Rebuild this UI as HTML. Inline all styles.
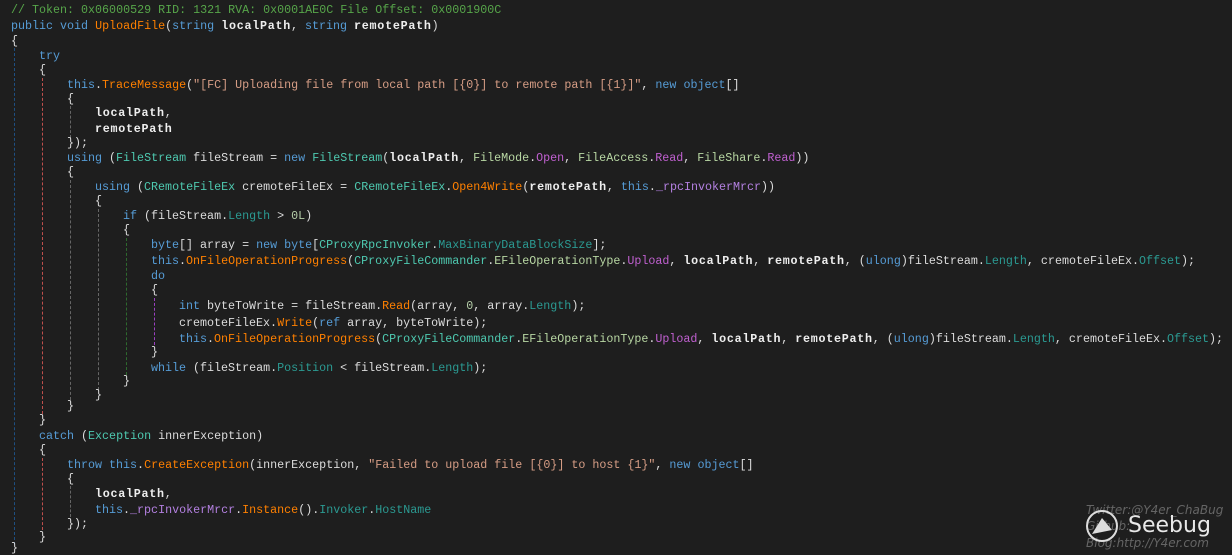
<!DOCTYPE html>
<html><head><meta charset="utf-8"><style>
html,body{margin:0;padding:0;background:#1e1e1e;width:1232px;height:555px;overflow:hidden}
body{position:relative;font-family:"Liberation Mono",monospace;font-size:11.68px;color:#dcdcdc}
.l{position:absolute;white-space:pre;height:15px;line-height:15px}
.k{color:#569cd6}.m{color:#ff8000}.s{color:#d69d85}.t{color:#4ec9b0}.p{color:#2b9a92}
.n{color:#b5cea8}.b{font-weight:bold;color:#eeeeee;letter-spacing:0.75px}.f{color:#b380e0}.c{color:#57a64a}
.e{color:#b8d7a3}.u{color:#c060d0}
.g{position:absolute;width:0;border-left:1px dashed}
.wm{position:absolute;color:#777;font-family:"DejaVu Sans",sans-serif;font-style:italic;font-size:12px;opacity:.8}
</style></head><body>
<div class="g" style="left:14px;top:48px;height:497px;border-color:#1f4f80"></div>
<div class="g" style="left:42px;top:78px;height:336px;border-color:#c0504d"></div>
<div class="g" style="left:42px;top:458px;height:72px;border-color:#c0504d"></div>
<div class="g" style="left:70px;top:106px;height:32px;border-color:#666"></div>
<div class="g" style="left:70px;top:180px;height:225px;border-color:#666"></div>
<div class="g" style="left:70px;top:486px;height:31px;border-color:#666"></div>
<div class="g" style="left:98px;top:209px;height:181px;border-color:#666"></div>
<div class="g" style="left:126px;top:238px;height:137px;border-color:#2e6a2e"></div>
<div class="g" style="left:154px;top:298px;height:47px;border-color:#9a40c0"></div>

<div class="l" style="top:3px;left:11px"><span class="c">// Token: 0x06000529 RID: 1321 RVA: 0x0001AE0C File Offset: 0x0001900C</span></div>
<div class="l" style="top:19px;left:11px"><span class="k">public void</span> <span class="m">UploadFile</span>(<span class="k">string</span> <span class="b">localPath</span>, <span class="k">string</span> <span class="b">remotePath</span>)</div>
<div class="l" style="top:34px;left:11px">{</div>
<div class="l" style="top:49px;left:39px"><span class="k">try</span></div>
<div class="l" style="top:63px;left:39px">{</div>
<div class="l" style="top:78px;left:67px"><span class="k">this</span>.<span class="m">TraceMessage</span>(<span class="s">"[FC] Uploading file from local path [{0}] to remote path [{1}]"</span>, <span class="k">new object</span>[]</div>
<div class="l" style="top:92px;left:67px">{</div>
<div class="l" style="top:106px;left:95px"><span class="b">localPath</span>,</div>
<div class="l" style="top:122px;left:95px"><span class="b">remotePath</span></div>
<div class="l" style="top:136px;left:67px">});</div>
<div class="l" style="top:151px;left:67px"><span class="k">using</span> (<span class="t">FileStream</span> fileStream = <span class="k">new</span> <span class="t">FileStream</span>(<span class="b">localPath</span>, <span class="e">FileMode</span>.<span class="u">Open</span>, <span class="e">FileAccess</span>.<span class="u">Read</span>, <span class="e">FileShare</span>.<span class="u">Read</span>))</div>
<div class="l" style="top:165px;left:67px">{</div>
<div class="l" style="top:180px;left:95px"><span class="k">using</span> (<span class="t">CRemoteFileEx</span> cremoteFileEx = <span class="t">CRemoteFileEx</span>.<span class="m">Open4Write</span>(<span class="b">remotePath</span>, <span class="k">this</span>.<span class="f">_rpcInvokerMrcr</span>))</div>
<div class="l" style="top:194px;left:95px">{</div>
<div class="l" style="top:209px;left:123px"><span class="k">if</span> (fileStream.<span class="p">Length</span> &gt; <span class="n">0L</span>)</div>
<div class="l" style="top:223px;left:123px">{</div>
<div class="l" style="top:238px;left:151px"><span class="k">byte</span>[] array = <span class="k">new byte</span>[<span class="t">CProxyRpcInvoker</span>.<span class="p">MaxBinaryDataBlockSize</span>];</div>
<div class="l" style="top:254px;left:151px"><span class="k">this</span>.<span class="m">OnFileOperationProgress</span>(<span class="t">CProxyFileCommander</span>.<span class="e">EFileOperationType</span>.<span class="u">Upload</span>, <span class="b">localPath</span>, <span class="b">remotePath</span>, (<span class="k">ulong</span>)fileStream.<span class="p">Length</span>, cremoteFileEx.<span class="p">Offset</span>);</div>
<div class="l" style="top:269px;left:151px"><span class="k">do</span></div>
<div class="l" style="top:283px;left:151px">{</div>
<div class="l" style="top:299px;left:179px"><span class="k">int</span> byteToWrite = fileStream.<span class="m">Read</span>(array, <span class="n">0</span>, array.<span class="p">Length</span>);</div>
<div class="l" style="top:316px;left:179px">cremoteFileEx.<span class="m">Write</span>(<span class="k">ref</span> array, byteToWrite);</div>
<div class="l" style="top:332px;left:179px"><span class="k">this</span>.<span class="m">OnFileOperationProgress</span>(<span class="t">CProxyFileCommander</span>.<span class="e">EFileOperationType</span>.<span class="u">Upload</span>, <span class="b">localPath</span>, <span class="b">remotePath</span>, (<span class="k">ulong</span>)fileStream.<span class="p">Length</span>, cremoteFileEx.<span class="p">Offset</span>);</div>
<div class="l" style="top:345px;left:151px">}</div>
<div class="l" style="top:361px;left:151px"><span class="k">while</span> (fileStream.<span class="p">Position</span> &lt; fileStream.<span class="p">Length</span>);</div>
<div class="l" style="top:374px;left:123px">}</div>
<div class="l" style="top:388px;left:95px">}</div>
<div class="l" style="top:399px;left:67px">}</div>
<div class="l" style="top:413px;left:39px">}</div>
<div class="l" style="top:429px;left:39px"><span class="k">catch</span> (<span class="t">Exception</span> innerException)</div>
<div class="l" style="top:443px;left:39px">{</div>
<div class="l" style="top:458px;left:67px"><span class="k">throw this</span>.<span class="m">CreateException</span>(innerException, <span class="s">"Failed to upload file [{0}] to host {1}"</span>, <span class="k">new object</span>[]</div>
<div class="l" style="top:472px;left:67px">{</div>
<div class="l" style="top:487px;left:95px"><span class="b">localPath</span>,</div>
<div class="l" style="top:503px;left:95px"><span class="k">this</span>.<span class="f">_rpcInvokerMrcr</span>.<span class="m">Instance</span>().<span class="p">Invoker</span>.<span class="p">HostName</span></div>
<div class="l" style="top:517px;left:67px">});</div>
<div class="l" style="top:530px;left:39px">}</div>
<div class="l" style="top:541px;left:11px">}</div>

<div class="wm" style="left:1086px;top:503px">Twitter:@Y4er_ChaBug</div>
<div class="wm" style="left:1086px;top:519px">Github:</div>
<div class="wm" style="left:1086px;top:536px">Blog:http://Y4er.com</div>
<svg style="position:absolute;left:1084px;top:508px" width="40" height="40" viewBox="0 0 40 40"><circle cx="18" cy="18" r="15" fill="none" stroke="#ddd" stroke-width="2"/><path d="M8 26 L18 10 L28 22 Z" fill="#ddd"/></svg>
<div style="position:absolute;left:1128px;top:513px;font-family:'DejaVu Sans',sans-serif;font-size:22px;color:#e8e8e8">Seebug</div>
</body></html>
